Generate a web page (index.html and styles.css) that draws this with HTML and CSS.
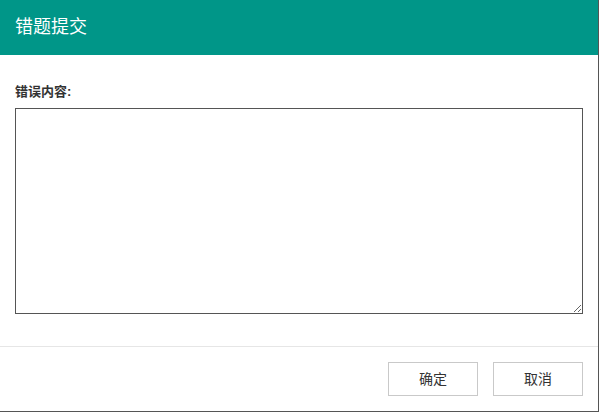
FILE: index.html
```html
<!DOCTYPE html>
<html lang="zh-CN">
<head>
  <meta charset="UTF-8">
  <title>错题提交</title>
  <link rel="stylesheet" href="styles.css">
</head>
<body>
<div class="dialog">
  <div class="dialog-title">错题提交</div>
  <div class="dialog-body">
    <label class="field-label" for="content">错误内容:</label>
    <textarea id="content" class="field-text"></textarea>
  </div>
  <div class="dialog-foot">
    <a href="javascript:;" class="btn">确定</a>
    <a href="javascript:;" class="btn">取消</a>
  </div>
</div>
</body>
</html>
```

FILE: styles.css
```css
* {
  margin: 0;
  padding: 0;
  box-sizing: border-box;
}
body {
  background: #fff;
  font-family: "Liberation Sans", "Noto Sans CJK SC", sans-serif;
  color: #333;
}
.dialog {
  width: 599px;
  height: 412px;
  background: #fff;
  border-right: 1px solid #555;
  border-bottom: 1px solid #555;
}
.dialog-title {
  height: 55px;
  line-height: 55px;
  padding-left: 15px;
  background: #009688;
  color: #fff;
  font-size: 18px;
}
.dialog-body {
  padding: 25px 15px 32px;
  border-bottom: 1px solid #e6e6e6;
}
.field-label {
  display: block;
  height: 24px;
  line-height: 24px;
  margin-bottom: 4px;
  font-size: 13px;
  font-weight: bold;
  color: #333;
}
.field-text {
  display: block;
  width: 568px;
  height: 206px;
  border: 1px solid #555;
  resize: both;
  outline: none;
  font-family: inherit;
}
.dialog-foot {
  display: flex;
  justify-content: flex-end;
  gap: 15px;
  padding: 15px 15px 0;
}
.btn {
  display: block;
  width: 90px;
  height: 34px;
  line-height: 32px;
  border: 1px solid #c9c9c9;
  text-align: center;
  font-size: 14px;
  color: #333;
  text-decoration: none;
}
```
